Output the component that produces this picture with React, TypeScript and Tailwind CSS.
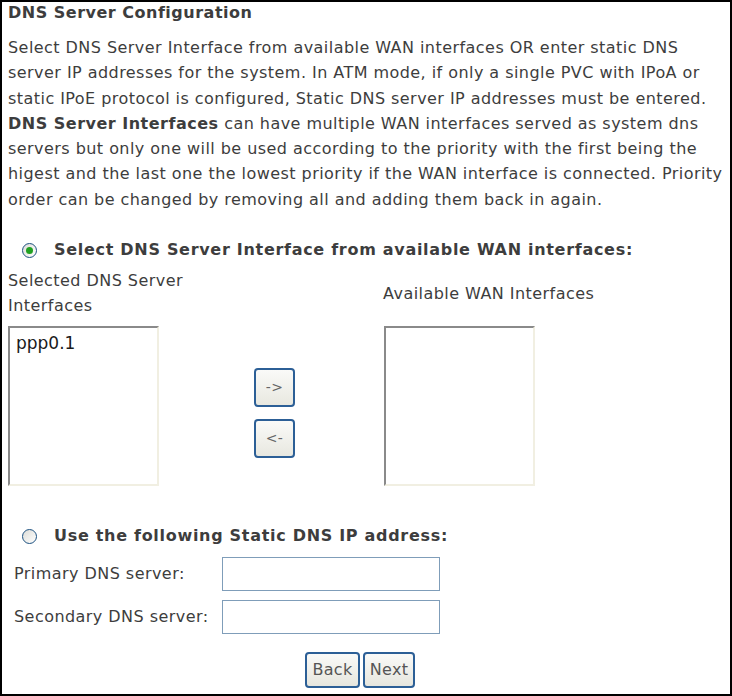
import React from "react";

const font = { fontFamily: '"DejaVu Sans", Verdana, sans-serif' };

function Radio({ checked }: { checked: boolean }) {
  return (
    <span className="inline-flex w-[15px] h-[15px] rounded-full border border-[#1c5180] bg-gradient-to-br from-[#dcdcd7] to-[#ffffff] items-center justify-center">
      {checked && <span className="w-[7px] h-[7px] rounded-full bg-[#21a121]" />}
    </span>
  );
}

function SmallBtn({ label }: { label: string }) {
  return (
    <button className="w-[41px] h-[39px] rounded-[4px] border-2 border-[#2c5f96] bg-gradient-to-b from-[#fafaf8] to-[#e8e8e0] text-[14px] text-[#666] flex items-center justify-center">
      {label}
    </button>
  );
}

function NavBtn({ label, w }: { label: string; w: string }) {
  return (
    <button className={`${w} h-[36px] rounded-[4px] border-2 border-[#2c5f96] bg-gradient-to-b from-[#fafaf8] to-[#e6e6de] text-[16px] tracking-[0.3px] text-[#555] flex items-center justify-center`}>
      {label}
    </button>
  );
}

export default function App() {
  return (
    <div style={font} className="w-[732px] h-[696px] border-2 border-black bg-white text-[#3d3d3d] overflow-hidden">
      <div className="pl-[6px] pr-[4px]">
        <div className="font-bold text-[16px] tracking-[0.5px] leading-[22px]">DNS Server Configuration</div>
        <p className="text-[16px] tracking-[0.45px] leading-[25.3px] mt-[11px] whitespace-nowrap">
          Select DNS Server Interface from available WAN interfaces OR enter static DNS<br />
          server IP addresses for the system. In ATM mode, if only a single PVC with IPoA or<br />
          static IPoE protocol is configured, Static DNS server IP addresses must be entered.<br />
          <b className="tracking-[0.5px]">DNS Server Interfaces</b> can have multiple WAN interfaces served as system dns<br />
          servers but only one will be used according to the priority with the first being the<br />
          higest and the last one the lowest priority if the WAN interface is connected. Priority<br />
          order can be changed by removing all and adding them back in again.
        </p>

        <div className="flex items-center mt-[26px] h-[24px]">
          <span className="ml-[14px] mr-[17px] flex"><Radio checked /></span>
          <span className="font-bold text-[16px] tracking-[0.7px]">Select DNS Server Interface from available WAN interfaces:</span>
        </div>

        <div className="flex text-[16px] tracking-[0.45px] leading-[25px] mt-[6px]">
          <div className="w-[200px]">
            <div className="w-[195px]">Selected DNS Server Interfaces</div>
            <div className="mt-[8px] w-[151px] h-[160px] border-2 border-t-[#8a8a8a] border-l-[#8a8a8a] border-r-[#f1efe2] border-b-[#f1efe2] bg-white pl-[6px] text-[#1a1a1a] text-[17px] tracking-normal leading-[22px] pt-[4px]">
              ppp0.1
            </div>
          </div>
          <div className="w-[133px] flex flex-col items-center pt-[100px] gap-[12px]">
            <SmallBtn label="->" />
            <SmallBtn label="<-" />
          </div>
          <div className="ml-[42px]">
            <div className="pt-[13px] h-[50px]">Available WAN Interfaces</div>
            <div className="mt-[8px] ml-[1px] w-[151px] h-[160px] border-2 border-t-[#8a8a8a] border-l-[#8a8a8a] border-r-[#f1efe2] border-b-[#f1efe2] bg-white" />
          </div>
        </div>

        <div className="flex items-center mt-[38px] h-[24px]">
          <span className="ml-[14px] mr-[17px] flex"><Radio checked={false} /></span>
          <span className="font-bold text-[16px] tracking-[0.7px]">Use the following Static DNS IP address:</span>
        </div>

        <div className="mt-[9px] flex flex-col gap-[9px] text-[16px] tracking-[0.45px]">
          <div className="flex items-center">
            <span className="w-[214px] pl-[6px]">Primary DNS server:</span>
            <input className="w-[218px] h-[34px] border border-[#7f9db9] outline-none" />
          </div>
          <div className="flex items-center">
            <span className="w-[214px] pl-[6px]">Secondary DNS server:</span>
            <input className="w-[218px] h-[34px] border border-[#7f9db9] outline-none" />
          </div>
        </div>

        <div className="flex justify-start pl-[297px] gap-[3px] mt-[18px]">
          <NavBtn label="Back" w="w-[55px]" />
          <NavBtn label="Next" w="w-[52px]" />
        </div>
      </div>
    </div>
  );
}
